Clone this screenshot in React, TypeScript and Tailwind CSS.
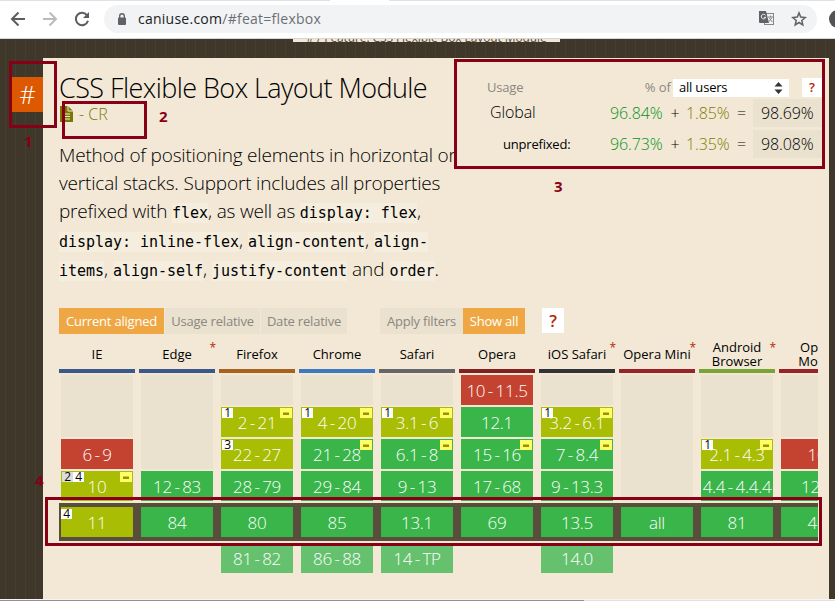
import { ReactNode } from "react";

type Tone = "n" | "y" | "a" | "u" | "f";
type CellData = { t: Tone; v?: string; span?: number; notes?: string[]; prefix?: boolean };
type Browser = {
  name: string;
  bar: string;
  star?: boolean;
  past: CellData[];
  current: CellData;
  future?: string;
};

const tones: Record<Tone, string> = {
  n: "bg-[#c44230] text-white",
  y: "bg-[#39b54a] text-white",
  a: "bg-[#a8bd04] text-white",
  u: "bg-[#eae1cf]",
  f: "bg-[#66c16f] text-white",
};

const spans: Record<number, string> = {
  1: "h-[30px]",
  2: "h-[62px]",
  3: "h-[94px]",
  4: "h-[126px]",
};

const browsers: Browser[] = [
  {
    name: "IE", bar: "bg-[#39598a]",
    past: [{ t: "u", span: 2 }, { t: "n", v: "6 - 9" }, { t: "a", v: "10", notes: ["2", "4"], prefix: true }],
    current: { t: "a", v: "11", notes: ["4"] },
  },
  {
    name: "Edge", bar: "bg-[#39598a]", star: true,
    past: [{ t: "u", span: 3 }, { t: "y", v: "12 - 83" }],
    current: { t: "y", v: "84" },
  },
  {
    name: "Firefox", bar: "bg-[#a76120]",
    past: [{ t: "u" }, { t: "a", v: "2 - 21", notes: ["1"], prefix: true }, { t: "a", v: "22 - 27", notes: ["3"] }, { t: "y", v: "28 - 79" }],
    current: { t: "y", v: "80" }, future: "81 - 82",
  },
  {
    name: "Chrome", bar: "bg-[#3e79bd]",
    past: [{ t: "u" }, { t: "a", v: "4 - 20", notes: ["1"], prefix: true }, { t: "y", v: "21 - 28", prefix: true }, { t: "y", v: "29 - 84" }],
    current: { t: "y", v: "85" }, future: "86 - 88",
  },
  {
    name: "Safari", bar: "bg-[#666666]",
    past: [{ t: "u" }, { t: "a", v: "3.1 - 6", notes: ["1"], prefix: true }, { t: "y", v: "6.1 - 8", prefix: true }, { t: "y", v: "9 - 13" }],
    current: { t: "y", v: "13.1" }, future: "14 - TP",
  },
  {
    name: "Opera", bar: "bg-[#821f20]",
    past: [{ t: "n", v: "10 - 11.5" }, { t: "y", v: "12.1" }, { t: "y", v: "15 - 16", prefix: true }, { t: "y", v: "17 - 68" }],
    current: { t: "y", v: "69" },
  },
  {
    name: "iOS Safari", bar: "bg-[#333333]", star: true,
    past: [{ t: "u" }, { t: "a", v: "3.2 - 6.1", notes: ["1"], prefix: true }, { t: "y", v: "7 - 8.4", prefix: true }, { t: "y", v: "9 - 13.3" }],
    current: { t: "y", v: "13.5" }, future: "14.0",
  },
  {
    name: "Opera Mini", bar: "bg-[#96242a]", star: true,
    past: [{ t: "u", span: 4 }],
    current: { t: "y", v: "all" },
  },
  {
    name: "Android Browser", bar: "bg-[#7aa437]", star: true,
    past: [{ t: "u", span: 2 }, { t: "a", v: "2.1 - 4.3", notes: ["1"], prefix: true }, { t: "y", v: "4.4 - 4.4.4" }],
    current: { t: "y", v: "81" },
  },
  {
    name: "Opera Mobile", bar: "bg-[#96242a]",
    past: [{ t: "u", span: 2 }, { t: "n", v: "10" }, { t: "y", v: "12.1" }],
    current: { t: "y", v: "46" },
  },
];

function Cell({ cell, flush }: { cell: CellData; flush?: boolean }) {
  return (
    <div
      className={`relative flex w-[72px] shrink-0 items-center justify-center whitespace-nowrap text-[17px] leading-none font-light tracking-[-0.3px] [word-spacing:-1.5px] ${tones[cell.t]} ${spans[cell.span ?? 1]}`}
    >
      {cell.v}
      {cell.notes && (
        <span className={`absolute flex text-[12px] font-normal leading-[10px] text-black ${flush ? "left-0 top-[2px]" : "left-px top-px"}`}>
          {cell.notes.map((n, i) => (
            <span
              key={n}
              className={`h-[10px] w-[11px] text-center ${cell.notes!.length > 1 && i === 0 ? "bg-[#ddd]" : "bg-white"}`}
            >
              {n}
            </span>
          ))}
        </span>
      )}
      {cell.prefix && (
        <span className="absolute right-px top-px flex h-[10px] w-[12px] items-center justify-center bg-[#ffff66]">
          <span className="h-[3px] w-[6px] border-t border-[#ccc83c] bg-[#99920a]" />
        </span>
      )}
    </div>
  );
}

function Column({ b }: { b: Browser }) {
  return (
    <div className="flex w-[76px] shrink-0 flex-col items-center">
      <div className="relative flex h-[31px] w-full items-center justify-center text-center text-[13px] leading-[14px]">
        <span className={b.name.length > 10 ? `w-[62px] ${b.star ? "" : "pl-[4px]"}` : "whitespace-nowrap"}>{b.name}</span>
        {b.star && <span className="absolute right-[-1px] top-[4px] text-[12px] leading-none text-[#b52700]">*</span>}
      </div>
      <div className={`h-[4px] w-full ${b.bar}`} />
      <div className="mt-[2px] flex h-[126px] flex-col gap-[2px]">
        {b.past.map((c, i) => (
          <Cell key={i} cell={c} />
        ))}
      </div>
      <div className="mt-[6px]">
        <Cell cell={b.current} flush />
      </div>
      <div className="mt-[6px] h-[30px]">{b.future && <Cell cell={{ t: "f", v: b.future }} />}</div>
    </div>
  );
}

function Code({ children }: { children: ReactNode }) {
  return (
    <code className="bg-[#f5eddd] py-[1px] font-['DejaVu_Sans_Mono',monospace] text-[15px] font-normal leading-[18px] tracking-[-0.03px]">
      {children}
    </code>
  );
}

function Toolbar() {
  return (
    <header className="flex h-[39px] shrink-0 items-center border-b border-[#d4d6d9] bg-white pb-px text-[#5f6368]">
      <svg className="ml-[10px] shrink-0" width="16" height="16" viewBox="0 0 16 16" fill="none" stroke="#5a5e63" strokeWidth="2">
        <path d="M15 8H2.5M8.5 1.5 2 8l6.500 6.500" />
      </svg>
      <svg className="ml-[16px] shrink-0" width="16" height="16" viewBox="0 0 16 16" fill="none" stroke="#b9bbbe" strokeWidth="2">
        <path d="M1 8h12.500M7.500 1.500 14 8l-6.500 6.500" />
      </svg>
      <svg className="ml-[16px] shrink-0" width="16" height="16" viewBox="0 0 16 16">
        <path d="M13.200 4.500A6.200 6.200 0 1 0 14 9.800" fill="none" stroke="#5a5e63" strokeWidth="2" />
        <path d="M15 1v6H9z" fill="#5a5e63" />
      </svg>
      <div className="ml-[14px] flex h-[28px] w-[713px] shrink-0 items-center rounded-full bg-[#f1f3f4] pl-[13px] pr-[10px]">
        <svg width="10" height="12" viewBox="0 0 10 12">
          <path d="M2.700 5V3a2.300 2.300 0 0 1 4.600 0v2" fill="none" stroke="#5f6368" strokeWidth="1.400" />
          <rect x="1" y="4.500" width="8" height="7.500" rx="1" fill="#5f6368" />
        </svg>
        <span className="ml-[11px] text-[14px] leading-none tracking-[0.25px] text-[#202124]">
          caniuse.com<span className="text-[#6b6f74]">/#feat=flexbox</span>
        </span>
        <svg className="ml-auto" width="15" height="15" viewBox="0 0 15 15">
          <rect x="5.500" y="2.500" width="9" height="11" fill="#f1f3f4" stroke="#80868b" />
          <path d="M0 0h7l3 12H1a1 1 0 0 1-1-1z" fill="#5f6368" />
          <path d="M6.500 4.300a2.300 2.300 0 1 0 .300 2H4.800" fill="none" stroke="#f1f3f4" />
          <path d="M9 6h5M11.500 4.500V6M13 6.500l-3 4M10.300 7l3 4" fill="none" stroke="#80868b" />
        </svg>
        <svg className="ml-[17px]" width="16" height="16" viewBox="0 0 16 16" fill="none" stroke="#5f6368" strokeWidth="1.500">
          <path d="m8 1.900 1.700 4.200 4.500.400-3.400 3 1 4.400L8 11.500l-3.800 2.400 1-4.400-3.400-3 4.500-.400z" />
        </svg>
      </div>
      <div className="ml-[12px] size-[18px] shrink-0 rounded-full bg-[#505357]" />
    </header>
  );
}

function UsageRow({ full, partial, total }: { full: string; partial: string; total: string }) {
  return (
    <>
      <span className="w-[54px] text-[#069318]">{full}</span>
      <span className="w-[22px] text-center">+</span>
      <span className="w-[44px] text-[#807b05]">{partial}</span>
      <span className="w-[23px] text-center">=</span>
      <span className="flex h-[28px] w-[71px] items-center bg-[#eae1cf] pl-[8px]">{total}</span>
    </>
  );
}

function Usage() {
  return (
    <div className="ml-[30px] flex w-[338px] shrink-0 flex-col pt-[20px] text-black">
      <div className="flex h-[19px] items-center text-[13px] leading-none text-[#8b8780]">
        <span className="ml-px tracking-[-0.2px]">Usage</span>
        <span className="ml-auto mr-[2px]">% of</span>
        <span className="flex h-[18px] w-[116px] items-center justify-between bg-white pl-[6px] pr-[6px] text-[13px] tracking-[-0.2px] text-black">
          all users
          <svg width="9" height="12" viewBox="0 0 9 12" fill="#333">
            <path d="M4.500 0 8.500 4.500h-8zM4.500 12l-4-4.500h8z" />
          </svg>
        </span>
        <span className="ml-[13px] flex h-[19px] w-[22px] items-center justify-center bg-white pr-[2px] font-semibold text-[#b52700]">?</span>
      </div>
      <div className="mt-[2px] flex h-[28px] items-center text-[16px] font-light leading-none tracking-[-0.1px]">
        <span className="ml-[4px] mr-auto pb-[3px]">Global</span>
        <UsageRow full="96.84%" partial="1.85%" total="98.69%" />
      </div>
      <div className="mt-[3px] flex h-[28px] items-center text-[16px] font-light leading-none tracking-[-0.1px]">
        <span className="ml-[17px] mr-auto text-[13px] font-normal tracking-[-0.2px]">unprefixed:</span>
        <UsageRow full="96.73%" partial="1.35%" total="98.08%" />
      </div>
    </div>
  );
}

function Mark({ className, children }: { className: string; children?: ReactNode }) {
  return <div className={`absolute ${className}`}>{children}</div>;
}

export default function App() {
  return (
    <div className="relative flex h-[601px] w-[835px] flex-col overflow-hidden bg-[#3f3729] font-['Open_Sans','Noto_Sans',sans-serif] text-black">
      <Toolbar />
      <div className="absolute left-0 top-0 flex h-px w-full justify-between">
        <span className="w-[330px] bg-[#dee1e6]" />
        <span className="w-[446px] bg-[#dee1e6]" />
      </div>
      <main className="flex h-[560px] shrink-0 flex-col bg-[repeating-linear-gradient(90deg,#3f3729_0px,#3f3729_5px,#463e2f_5px,#463e2f_6px,#3f3729_6px,#3f3729_10px)]">
        <div className="h-[19px] shrink-0 pl-[293px]">
          <div className="flex h-[3px] w-[267px] items-end justify-center overflow-hidden bg-[#f3e8d6] text-[12px] leading-[8px] tracking-[-0.1px] whitespace-nowrap text-[#594f3c]">
            # / Feature: CSS Flexible Box Layout Module
          </div>
        </div>
        <div className="flex h-[541px]">
          <div className="flex w-[43px] shrink-0 justify-end pt-[19px]">
            <a className="flex h-[35px] w-[31px] items-center justify-center bg-[#dc5901] text-[25px] font-light leading-none text-white">#</a>
          </div>
          <section className="flex w-[786px] shrink-0 flex-col bg-[#f3e8d6] pl-[16px]">
            <div className="flex h-[250px] shrink-0">
              <div className="w-[397px] shrink-0 overflow-hidden whitespace-nowrap pt-[13px] font-light">
                <h1 className="h-[34px] text-[27px] leading-[34px] tracking-[-0.56px]">CSS Flexible Box Layout Module</h1>
                <div className="flex h-[18px] items-center text-[16px] leading-none text-[#7b7703]">
                  <svg width="14" height="16" viewBox="0 0 14 16" className="mr-[6px]">
                    <path d="M1 0h8l5 5v11H1z" fill="#7b7703" />
                    <path d="M9 0v5h5M4 8h7M4 10.500h7M4 13h7" fill="none" stroke="#f3e8d6" />
                  </svg>
                  - CR
                </div>
                <div className="pt-[18px] text-[19px] leading-[28px]">
                  <div className="tracking-[-0.2px]">Method of positioning elements in horizontal or</div>
                  <div className="tracking-[-0.17px]">vertical stacks. Support includes all properties</div>
                  <div className="h-[29px] tracking-[-0.2px]">prefixed with <Code>flex</Code>, as well as <Code>display: flex</Code>,</div>
                  <div className="h-[29px]"><Code>display: inline-flex</Code>, <Code>align-content</Code>, <Code>align-</Code></div>
                  <div><Code>items</Code>, <Code>align-self</Code>, <Code>justify-content</Code> and <Code>order</Code>.</div>
                </div>
              </div>
              <Usage />
            </div>
            <div className="flex h-[26px] shrink-0 text-[13px] leading-[26px] tracking-[-0.2px] whitespace-nowrap text-[#8b8780]">
              <button className="w-[105px] bg-[#eea743] text-white">Current aligned</button>
              <button className="ml-px w-[95px] bg-[#eae1cf]">Usage relative</button>
              <button className="ml-px w-[86px] bg-[#eae1cf]">Date relative</button>
              <button className="ml-[33px] w-[83px] bg-[#eae1cf]">Apply filters</button>
              <button className="w-[62px] bg-[#eea743] text-white">Show all</button>
              <button className="ml-[17px] h-[25px] w-[22px] bg-white text-[17px] font-semibold leading-[25px] text-[#b52700]">?</button>
            </div>
            <div className="mt-[4px] flex h-[236px] w-[759px] shrink-0 gap-[4px] overflow-hidden bg-[linear-gradient(#594d3b,#594d3b)] bg-[length:100%_38px] bg-[position:0_165px] bg-no-repeat">
              {browsers.map((b) => (
                <Column key={b.name} b={b} />
              ))}
            </div>
          </section>
        </div>
      </main>
      <footer className="flex h-[2px] shrink-0 border-t border-[#f4f4f4] bg-[#e1e1e1]">
        <div className="w-[584px] bg-[#929292]" />
      </footer>

      <Mark className="left-[9px] top-[61px] h-[67px] w-[48px] border-3 border-[#880015]" />
      <Mark className="left-[62px] top-[101px] h-[38px] w-[85px] border-3 border-[#880015]" />
      <Mark className="left-[454px] top-[59px] h-[110px] w-[371px] border-3 border-[#880015]" />
      <Mark className="left-[45px] top-[497px] h-[49px] w-[777px] border-3 border-[#880015]" />
      <Mark className="left-[24px] top-[134px] text-[15px] font-bold leading-none text-[#880015]">1</Mark>
      <Mark className="left-[159px] top-[109px] text-[15px] font-bold leading-none text-[#880015]">2</Mark>
      <Mark className="left-[554px] top-[179px] text-[15px] font-bold leading-none text-[#880015]">3</Mark>
      <Mark className="left-[35px] top-[473px] text-[15px] font-bold leading-none text-[#880015]">4</Mark>
    </div>
  );
}
